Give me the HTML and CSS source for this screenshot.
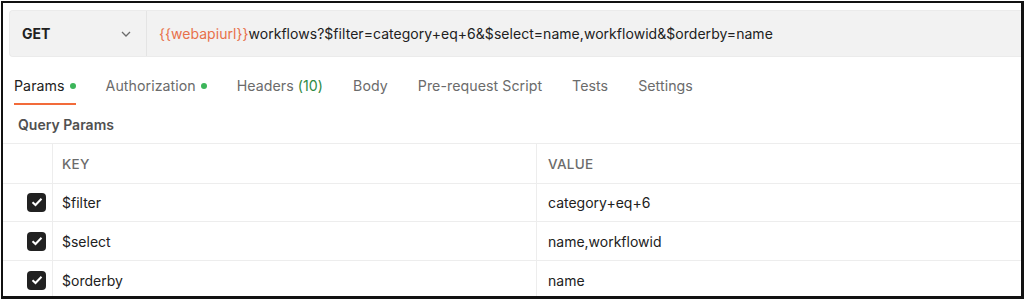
FILE: index.html
```html
<!DOCTYPE html>
<html lang="en">
<head>
    <meta charset="UTF-8">
    <meta name="viewport" content="width=device-width, initial-scale=1.0">
    <title>Request - Params</title>
    <link rel="stylesheet" href="styles.css">
</head>
<body>
    <div class="frame">
        <div class="request-bar">
            <div class="method">
                <span class="method-name">GET</span>
                <svg class="chevron" width="10" height="6" viewBox="0 0 10 6"><path d="M1 1 L5 5 L9 1" fill="none" stroke="#6b6b6b" stroke-width="1.3"/></svg>
            </div>
            <div class="url"><span class="var">{{webapiurl}}</span>workflows?$filter=category+eq+6&amp;$select=name,workflowid&amp;$orderby=name</div>
        </div>

        <div class="tabs">
            <div class="tab active">Params<span class="dot"></span></div>
            <div class="tab">Authorization<span class="dot"></span></div>
            <div class="tab">Headers <span class="count">(10)</span></div>
            <div class="tab">Body</div>
            <div class="tab">Pre-request Script</div>
            <div class="tab">Tests</div>
            <div class="tab">Settings</div>
        </div>

        <div class="section-title">Query Params</div>

        <div class="params-table">
            <div class="cell head"></div>
            <div class="cell head key">KEY</div>
            <div class="cell head">VALUE</div>

            <div class="cell check"><span class="checkbox"><svg width="12" height="10" viewBox="0 0 12 10"><path d="M1.5 5.2 L4.5 8 L10.5 1.8" fill="none" stroke="#fff" stroke-width="2"/></svg></span></div>
            <div class="cell key">$filter</div>
            <div class="cell">category+eq+6</div>

            <div class="cell check"><span class="checkbox"><svg width="12" height="10" viewBox="0 0 12 10"><path d="M1.5 5.2 L4.5 8 L10.5 1.8" fill="none" stroke="#fff" stroke-width="2"/></svg></span></div>
            <div class="cell key">$select</div>
            <div class="cell">name,workflowid</div>

            <div class="cell check"><span class="checkbox"><svg width="12" height="10" viewBox="0 0 12 10"><path d="M1.5 5.2 L4.5 8 L10.5 1.8" fill="none" stroke="#fff" stroke-width="2"/></svg></span></div>
            <div class="cell key">$orderby</div>
            <div class="cell">name</div>
        </div>
    </div>
</body>
</html>
```

FILE: styles.css
```css
body {
    margin: 0;
    background: #ffffff;
    font-family: 'Inter', 'Liberation Sans', sans-serif;
    color: #212121;
}

.frame {
    box-sizing: border-box;
    width: 1023px;
    height: 298px;
    margin: 1px 0 0 1px;
    border: 2px solid #111;
    border-right-width: 3px;
    border-bottom-width: 3px;
    background: #fff;
    overflow: hidden;
}

/* request bar */
.request-bar {
    display: flex;
    height: 47px;
    margin: 7px 0 0 6px;
    background: #f2f2f2;
    border: 1px solid #ebebeb;
    border-right: none;
    border-radius: 4px 0 0 4px;
    box-sizing: border-box;
}

.method {
    display: flex;
    align-items: center;
    justify-content: space-between;
    width: 137px;
    box-sizing: border-box;
    padding: 0 15px 0 12px;
    border-right: 1px solid #e4e4e4;
}

.method-name {
    font-size: 14px;
    font-weight: 700;
}

.url {
    display: flex;
    align-items: center;
    padding-left: 12px;
    font-size: 14px;
    letter-spacing: 0.04px;
    white-space: nowrap;
}

.url .var {
    color: #e8704a;
}

/* tabs */
.tabs {
    display: flex;
    gap: 30px;
    padding-left: 11px;
}

.tab {
    display: flex;
    align-items: center;
    height: 20px;
    padding: 19px 0 7px;
    border-bottom: 2px solid transparent;
    font-size: 14.2px;
    letter-spacing: 0.05px;
    line-height: 20px;
    color: #6b6b6b;
    white-space: pre;
}

.tab.active {
    color: #212121;
    border-bottom-color: #f26b3a;
}

.dot {
    width: 6px;
    height: 6px;
    margin-left: 5px;
    border-radius: 50%;
    background: #3cb55a;
}

.count {
    color: #2e8b45;
}

.section-title {
    margin-top: 10px;
    padding-left: 15px;
    font-size: 14px;
    font-weight: 600;
    line-height: 20px;
    color: #505050;
}

/* params table */
.params-table {
    display: grid;
    grid-template-columns: 49px 484px 1fr;
    grid-auto-rows: 39px;
    margin-top: 8px;
    border-top: 1px solid #ededed;
}

.cell {
    display: flex;
    align-items: center;
    padding-left: 11px;
    font-size: 14px;
    border-bottom: 1px solid #ededed;
    box-sizing: border-box;
}

.cell + .cell:not(.check) {
    border-left: 1px solid #ededed;
}

.cell.key {
    padding-left: 9px;
}

.cell.head {
    height: 40px;
    font-size: 13.5px;
    font-weight: 500;
    color: #6b6b6b;
    letter-spacing: 0.3px;
}

.cell.check {
    justify-content: flex-end;
    padding: 0 6px 0 0;
}

.checkbox {
    display: flex;
    align-items: center;
    justify-content: center;
    width: 19px;
    height: 19px;
    border-radius: 4px;
    background: #212121;
}
```
